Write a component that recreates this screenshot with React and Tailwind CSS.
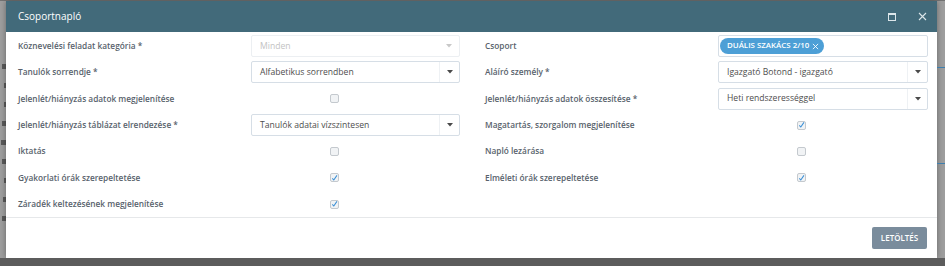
import React from 'react';

function Caret({ muted }) {
  return (
    <svg width="6" height="4" viewBox="0 0 6 4">
      <path d="M0 0 L6 0 L3 3.5 Z" fill={muted ? '#c8c8c8' : '#4a4a4a'} />
    </svg>
  );
}

function Select({ value, disabled }) {
  return (
    <div className={`flex h-[22px] w-full rounded-[2px] border ${disabled ? 'border-[#eceff2]' : 'border-[#d6dee6]'} bg-white`}>
      <div className={`flex flex-1 items-center pl-2 text-[8.6px] ${disabled ? 'text-[#c2c2c2]' : 'text-[#4d4d4d]'}`}>{value}</div>
      <div className={`flex w-[20px] items-center justify-center ${disabled ? '' : 'border-l border-[#eef1f4]'}`}>
        <Caret muted={disabled} />
      </div>
    </div>
  );
}

function Checkbox({ checked }) {
  return (
    <div className="ml-[79px] flex h-[9px] w-[9px] items-center justify-center rounded-[2px] border border-[#c4c9ce] bg-[#f1f3f5]">
      {checked && (
        <svg width="8" height="8" viewBox="0 0 8 8">
          <path d="M1.5 4.5 L3.2 6.3 L6.8 1" fill="none" stroke="#3b8fd6" strokeWidth="1.2" />
        </svg>
      )}
    </div>
  );
}

function TagInput() {
  return (
    <div className="flex h-[22px] w-full items-center rounded-[2px] border border-[#d6dee6] bg-white pl-[1px]">
      <div className="flex h-[16px] items-center gap-[3px] rounded-full bg-[#4d9fd6] pl-[7px] pr-[5px] text-[7.9px] font-semibold text-white">
        <span>DUÁLIS SZAKÁCS 2/10</span>
        <svg width="7" height="7" viewBox="0 0 8 8">
          <path d="M1 1 L7 7 M7 1 L1 7" stroke="white" strokeWidth="1" />
        </svg>
      </div>
    </div>
  );
}

function Label({ children }) {
  return <div className="w-[233px] text-[8.3px] font-semibold text-[#58626c]">{children}</div>;
}

const rows = [
  {
    left: ['Köznevelési feladat kategória *', <Select value="Minden" disabled />],
    right: ['Csoport', <TagInput />],
  },
  {
    left: ['Tanulók sorrendje *', <Select value="Alfabetikus sorrendben" />],
    right: ['Aláíró személy *', <Select value="Igazgató Botond - igazgató" />],
  },
  {
    left: ['Jelenlét/hiányzás adatok megjelenítése', <Checkbox />],
    right: ['Jelenlét/hiányzás adatok összesítése *', <Select value="Heti rendszerességgel" />],
  },
  {
    left: ['Jelenlét/hiányzás táblázat elrendezése *', <Select value="Tanulók adatai vízszintesen" />],
    right: ['Magatartás, szorgalom megjelenítése', <Checkbox checked />],
  },
  {
    left: ['Iktatás', <Checkbox />],
    right: ['Napló lezárása', <Checkbox />],
  },
  {
    left: ['Gyakorlati órák szerepeltetése', <Checkbox checked />],
    right: ['Elméleti órák szerepeltetése', <Checkbox checked />],
  },
  {
    left: ['Záradék keltezésének megjelenítése', <Checkbox checked />],
    right: null,
  },
];

// clipped bits of the page behind the overlay (just marks, unreadable)
const behind = [4, 2, 2, 4, 5, 4, 2, 3, 4];

export default function App() {
  return (
    <div className="flex h-[266px] w-[945px] flex-col overflow-hidden bg-[#9e9e9e] font-['Open_Sans',sans-serif]">
      <div className="h-[1px] bg-[#737373]" />
      <div className="flex">
        <div className="flex w-[6px] flex-col items-end gap-[14px] pt-[63px]">
          {behind.map((w, i) => (
            <div key={i} className="h-[5px] bg-[#5a5a5a]" style={{ width: w }} />
          ))}
        </div>

        <div className="w-[931px] bg-white shadow-[0_0_6px_rgba(0,0,0,0.35)]">
          <div className="flex h-[31px] items-center justify-between bg-[#426a7a] pl-3 pr-[10px]">
            <div className="text-[10px] text-white">Csoportnapló</div>
            <div className="flex items-center gap-[22px]">
              <div className="h-[8px] w-[8px] border border-t-2 border-[#dce6ea]" />
              <svg width="9" height="9" viewBox="0 0 9 9">
                <path d="M1 1 L8 8 M8 1 L1 8" stroke="#dce6ea" strokeWidth="1.1" />
              </svg>
            </div>
          </div>

          <div className="pt-[1px]">
            {rows.map((r, i) => (
              <div key={i} className="flex h-[26.33px] items-center pl-3">
                <Label>{r.left[0]}</Label>
                <div className="w-[209px]">{r.left[1]}</div>
                <div className="w-[25px]" />
                {r.right && (
                  <>
                    <Label>{r.right[0]}</Label>
                    <div className="w-[210px]">{r.right[1]}</div>
                  </>
                )}
              </div>
            ))}
          </div>

          <div className="flex justify-end border-t border-[#e6e8ea] pb-[9px] pr-[10px] pt-[9px]">
            <button className="h-[22px] w-[55px] rounded-[2px] bg-[#7a8c9c] text-[8px] font-semibold text-white">
              LETÖLTÉS
            </button>
          </div>
        </div>

        <div className="flex w-[8px] flex-col pt-[66px]">
          <div className="h-[1px] bg-[#3e7fae]" />
          <div className="h-[95px]" />
          <div className="h-[1px] bg-[#3e7fae]" />
        </div>
      </div>
      <div className="flex-1 bg-[#5c5c5c]" />
    </div>
  );
}
